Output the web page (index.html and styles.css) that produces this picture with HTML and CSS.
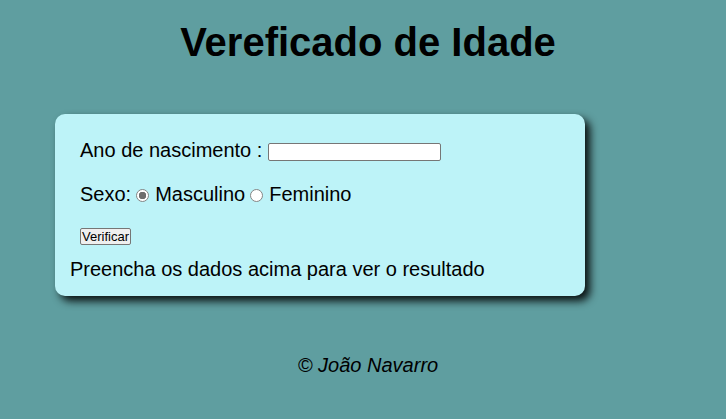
FILE: index.html
```html
<!DOCTYPE html>
<html lang="pt-BR">
<head>
<meta charset="utf-8">
<title>Vereficado de Idade</title>
<link rel="stylesheet" href="styles.css">
</head>
<body>
<div class="page">
  <header class="header">
    <h1 class="title">Vereficado de Idade</h1>
  </header>
  <section class="card">
    <div class="form">
      <div class="row row-ano">
        <label for="txtano">Ano de nascimento :</label>
        <input type="text" id="txtano" class="field">
      </div>
      <div class="row row-sexo">Sexo:<input type="radio" name="sexo" id="masc" class="radio" checked><label for="masc">Masculino</label><input type="radio" name="sexo" id="fem" class="radio"><label for="fem">Feminino</label></div>
      <div class="row-btn">
        <button type="button" class="btn">Verificar</button>
      </div>
    </div>
    <div class="result">Preencha os dados acima para ver o resultado</div>
  </section>
  <footer class="footer">
    <p class="credit">&copy; João Navarro</p>
  </footer>
</div>
</body>
</html>
```

FILE: styles.css
```css
html, body {
  margin: 0;
  padding: 0;
}
body {
  background: #5f9ea0;
  font-family: "Liberation Sans", Arial, sans-serif;
  color: #000;
  padding: 8px;
}
.page {
  width: 720px;
}
.title {
  margin: 11px 0 0;
  font-size: 40px;
  line-height: 46px;
  font-weight: bold;
  text-align: center;
}
.card {
  margin: 49px 0 0 47px;
  width: 500px;
  padding: 15px 15px 15px;
  background: #bdf3f8;
  border-radius: 10px;
  box-shadow: 5px 5px 8px rgba(0, 0, 0, 0.9);
  font-size: 20px;
  line-height: 23px;
}
.form {
  padding: 10px 0 0 10px;
}
.row-ano {
  margin-bottom: 21px;
}
.field {
  box-sizing: border-box;
  width: 173px;
  height: 18px;
  margin: 0;
  padding: 0 2px;
  border: 1px solid #767676;
  border-radius: 2px;
  background: #fff;
  vertical-align: 1px;
}
.radio {
  appearance: none;
  -webkit-appearance: none;
  box-sizing: border-box;
  width: 13px;
  height: 13px;
  margin: 0 6px 0 5px;
  border: 1px solid #858585;
  border-radius: 50%;
  background: #fff;
  vertical-align: -1px;
}
.radio:checked {
  background: radial-gradient(circle, #6e6e6e 0 3.5px, #fff 4px);
}
.radio + label {
  cursor: pointer;
}
.row-btn {
  margin-top: 22px;
  line-height: 0;
}
.btn {
  box-sizing: border-box;
  height: 17px;
  padding: 0 1px;
  margin: 0;
  font-family: "Liberation Sans", Arial, sans-serif;
  font-size: 13px;
  line-height: 15px;
  color: #000;
  background: #efefef;
  border: 1px solid #767676;
  border-radius: 2px;
}
.result {
  margin-top: 13px;
}
.footer {
  margin-top: 58px;
}
.credit {
  margin: 0;
  font-size: 20px;
  line-height: 23px;
  font-style: italic;
  text-align: center;
}
```
